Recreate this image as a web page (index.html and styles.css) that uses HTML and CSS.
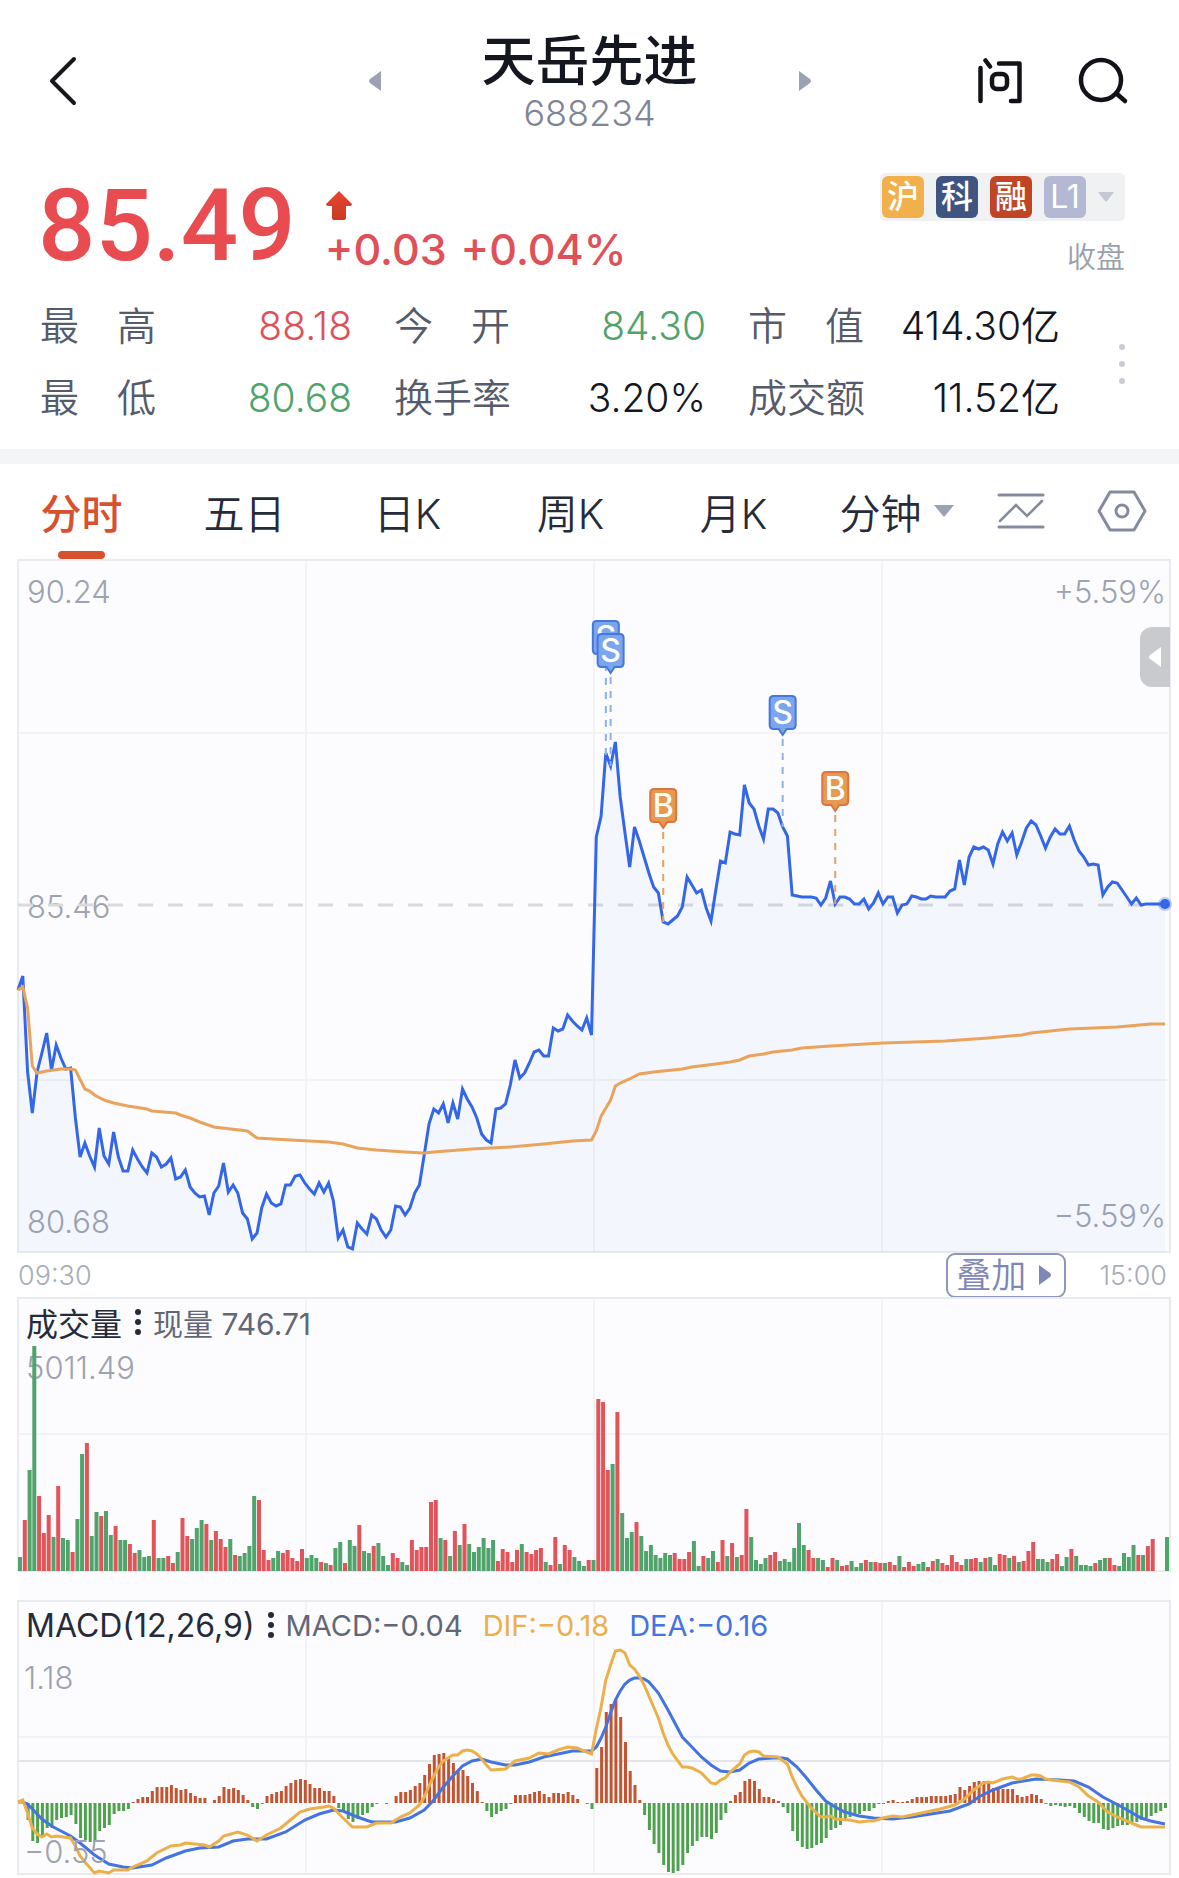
FILE: index.html
```html
<!DOCTYPE html>
<html lang="zh-CN">
<head>
<meta charset="UTF-8">
<meta name="viewport" content="width=device-width, initial-scale=1.0">
<title>天岳先进 688234</title>
<link rel="stylesheet" href="styles.css">
</head>
<body>

<header class="header">
  <button class="icon-btn back" aria-label="返回">
    <svg width="32" height="50" viewBox="0 0 32 50"><path d="M26 3 L4 25 L26 47" fill="none" stroke="#16181d" stroke-width="4" stroke-linecap="round" stroke-linejoin="round"/></svg>
  </button>
  <button class="icon-btn" aria-label="上一只">
    <svg width="12" height="20" viewBox="0 0 12 20"><path d="M12 0 V20 L1 12 Q-1 10 1 8 Z" fill="#9ca2b3"/></svg>
  </button>
  <div class="title">
    <h1>天岳先进</h1>
    <span class="code">688234</span>
  </div>
  <button class="icon-btn" aria-label="下一只">
    <svg width="12" height="20" viewBox="0 0 12 20"><path d="M0 0 V20 L11 12 Q13 10 11 8 Z" fill="#9ca2b3"/></svg>
  </button>
  <div class="actions">
    <button class="icon-btn" aria-label="问">
      <svg width="46" height="50" viewBox="0 0 46 50" fill="none" stroke="#111318" stroke-width="4.5" stroke-linecap="round" stroke-linejoin="round"><path d="M3.5 12 V45 M8.5 4.5 L13 10.5 M22 7.5 H42.5 V45 H34"/><rect x="15" y="18" width="15" height="15" rx="5"/></svg>
    </button>
    <button class="icon-btn" aria-label="搜索">
      <svg width="54" height="50" viewBox="0 0 54 50" fill="none" stroke="#111318" stroke-width="4.5" stroke-linecap="round"><circle cx="24" cy="24" r="20"/><path d="M40 38 L48 45"/></svg>
    </button>
  </div>
</header>

<section class="quote">
  <div class="price">85.49</div>
  <div class="change">
    <svg width="28" height="34" viewBox="0 0 28 34"><defs><linearGradient id="up" x1="0" y1="0" x2="0" y2="1"><stop offset="0" stop-color="#e64533"/><stop offset="1" stop-color="#c93a20"/></linearGradient></defs><path d="M14 1 L27 14 Q27 16 25 16 H21 V28 Q21 30 19 30 H9 Q7 30 7 28 V16 H3 Q1 16 1 14 Z" fill="url(#up)"/></svg>
    <div class="change-text"><span>+0.03</span><span>+0.04%</span></div>
  </div>
  <div class="market">
    <button class="badges" aria-label="标签">
      <span class="badge hu">沪</span>
      <span class="badge ke">科</span>
      <span class="badge rong">融</span>
      <span class="badge level">L1</span>
      <svg width="16" height="10" viewBox="0 0 16 10"><path d="M0 0 H16 L9 9 Q8 10 7 9 Z" fill="#c3c8d2"/></svg>
    </button>
    <span class="status">收盘</span>
  </div>
</section>

<section class="stats">
  <dl>
    <div><dt><span>最</span><span>高</span></dt><dd class="up">88.18</dd></div>
    <div><dt><span>今</span><span>开</span></dt><dd class="down">84.30</dd></div>
    <div><dt><span>市</span><span>值</span></dt><dd>414.30亿</dd></div>
    <div><dt><span>最</span><span>低</span></dt><dd class="down">80.68</dd></div>
    <div><dt><span>换手率</span></dt><dd>3.20%</dd></div>
    <div><dt><span>成交额</span></dt><dd>11.52亿</dd></div>
  </dl>
  <button class="icon-btn" aria-label="更多">
    <svg width="6" height="40" viewBox="0 0 6 40" fill="#c9ccd3"><circle cx="3" cy="3" r="3"/><circle cx="3" cy="20" r="3"/><circle cx="3" cy="37" r="3"/></svg>
  </button>
</section>

<nav class="tabs">
  <button class="tab active">分时</button>
  <button class="tab">五日</button>
  <button class="tab">日K</button>
  <button class="tab">周K</button>
  <button class="tab">月K</button>
  <button class="tab">分钟<svg width="20" height="12" viewBox="0 0 20 12"><path d="M0 0 H20 L11 11 Q10 12 9 11 Z" fill="#9ca2b3"/></svg></button>
  <button class="tab" aria-label="走势叠加">
    <svg width="48" height="38" viewBox="0 0 48 38" fill="none" stroke="#858b9c" stroke-width="3" stroke-linecap="round"><path d="M2 3 H46 M2 35 H46"/><path d="M3 29 L19 13 L30 24 L45 9" stroke-width="2.5"/></svg>
  </button>
  <button class="tab" aria-label="设置">
    <svg width="50" height="42" viewBox="0 0 50 42" fill="none" stroke="#858b9c" stroke-width="3" stroke-linejoin="round"><path d="M13 2 H37 L48 21 L37 40 H13 L2 21 Z"/><circle cx="25" cy="21" r="6"/></svg>
  </button>
</nav>

<main class="charts">
  <section class="panel price-panel">
    <span class="axis top-left">90.24</span>
    <span class="axis mid-left">85.46</span>
    <span class="axis bottom-left">80.68</span>
    <span class="axis top-right">+5.59%</span>
    <span class="axis bottom-right">−5.59%</span>
    <svg class="plot" id="price"></svg>
    <button class="handle" aria-label="展开">
      <svg width="12" height="20" viewBox="0 0 12 20"><path d="M12 0 V20 L1 12 Q-1 10 1 8 Z" fill="#fff"/></svg>
    </button>
  </section>

  <div class="times">
    <span>09:30</span>
    <button class="overlay-btn">叠加<svg width="12" height="20" viewBox="0 0 12 20"><path d="M0 0 V20 L11 12 Q13 10 11 8 Z" fill="#7e87b8"/></svg></button>
    <span>15:00</span>
  </div>

  <section class="panel volume-panel">
    <svg class="plot" id="volume-grid"></svg>
    <div class="legend">
      <button class="indicator">成交量<svg width="6" height="26" viewBox="0 0 6 26" fill="#262b3a"><circle cx="3" cy="3" r="3"/><circle cx="3" cy="13" r="3"/><circle cx="3" cy="23" r="3"/></svg></button>
      <span class="current">现量 746.71</span>
    </div>
    <span class="axis max">5011.49</span>
    <svg class="plot" id="volume"></svg>
  </section>

  <section class="panel macd-panel">
    <svg class="plot" id="macd-grid"></svg>
    <div class="legend">
      <button class="indicator">MACD(12,26,9)<svg width="6" height="26" viewBox="0 0 6 26" fill="#262b3a"><circle cx="3" cy="3" r="3"/><circle cx="3" cy="13" r="3"/><circle cx="3" cy="23" r="3"/></svg></button>
      <span class="values"><span>MACD:−0.04</span><span class="dif">DIF:−0.18</span><span class="dea">DEA:−0.16</span></span>
    </div>
    <span class="axis max">1.18</span>
    <svg class="plot" id="macd"></svg>
    <span class="axis min">−0.55</span>
  </section>
</main>

<script src="chart.js"></script>
</body>
</html>
```
FILE: styles.css
```css
* {
  box-sizing: border-box;
}
body {
  margin: 0;
  background: #fff;
  color: #14171f;
  font-family: Inter, "Noto Sans CJK SC", sans-serif;
}
button {
  margin: 0;
  padding: 0;
  border: 0;
  background: none;
  color: inherit;
  font: inherit;
  cursor: pointer;
}
svg {
  display: block;
  flex: none;
}

/* ヘッダー */
.header {
  display: grid;
  grid-template-columns: 1fr auto 418px auto 1fr;
  align-items: center;
  padding: 28px 48px 0;
  height: 134px;
}
.back {
  justify-self: start;
}
.title {
  display: flex;
  flex-direction: column;
  align-items: center;
}
.title h1 {
  margin: 0;
  font-size: 54px;
  font-weight: 500;
  line-height: 64px;
}
.code {
  color: #7f8596;
  font-size: 36px;
  font-weight: 300;
  line-height: 38px;
}
.actions {
  display: flex;
  justify-content: flex-end;
  gap: 54px;
}

/* 価格 */
.quote {
  display: flex;
  align-items: flex-start;
  padding: 39px 54px 0 38px;
  height: 158px;
}
.price {
  color: #e84b50;
  font-family: Roboto, sans-serif;
  font-size: 101px;
  font-weight: 500;
  line-height: 106px;
}
.change {
  padding: 17px 0 0 29px;
}
.change-text {
  display: flex;
  gap: 14px;
  color: #e05057;
  font-size: 43px;
  font-weight: 500;
  line-height: 50px;
}
.market {
  display: flex;
  flex-direction: column;
  align-items: flex-end;
  gap: 15px;
  margin-left: auto;
}
.badges {
  display: flex;
  align-items: center;
  gap: 12px;
  padding: 3px 11px 3px 2px;
  border-radius: 5px;
  background: #f0f1f3;
}
.badge {
  width: 42px;
  height: 42px;
  border-radius: 6px;
  color: #fff;
  font-size: 32px;
  font-weight: 500;
  line-height: 42px;
  text-align: center;
}
.hu { background: #f2b04c; }
.ke { background: #3f547f; }
.rong { background: #c04524; }
.level {
  background: #b3b8d3;
  font-weight: 400;
}
.status {
  color: #9a9fae;
  font-size: 29px;
  font-weight: 350;
  line-height: 44px;
}

/* 指標 */
.stats {
  display: flex;
  align-items: center;
  justify-content: space-between;
  padding: 0 54px 13px 40px;
  border-bottom: 15px solid #f4f5f7;
}
.stats dl {
  display: grid;
  grid-template-columns: repeat(3, 1fr);
  column-gap: 42px;
  flex: 0 1 1020px;
  margin: 0;
}
.stats dl div {
  display: flex;
  justify-content: space-between;
  height: 72px;
  font-size: 39px;
  font-weight: 350;
  line-height: 68px;
  white-space: nowrap;
}
.stats dt {
  display: flex;
  justify-content: space-between;
  width: 116px;
  color: #565b6b;
}
.stats dd {
  margin: 0;
}
.stats .up { color: #e05057; }
.stats .down { color: #4fa36b; }

/* タブ */
.tabs {
  display: grid;
  grid-template-columns: repeat(6, 163fr) 86fr 115fr;
  height: 96px;
}
.tab {
  position: relative;
  display: flex;
  align-items: center;
  justify-content: center;
  gap: 12px;
  padding-bottom: 2px;
  color: #262b3a;
  font-size: 41px;
  font-weight: 350;
}
.tab.active {
  color: #d8512f;
  font-weight: 500;
}
.tab.active::after {
  content: "";
  position: absolute;
  bottom: 1px;
  width: 47px;
  height: 8px;
  border-radius: 4px;
  background: #d8512f;
}

/* チャート */
.charts {
  padding: 0 9px 4px 18px;
}
.panel {
  position: relative;
  background: #fcfcfe;
}
.plot {
  position: absolute;
  inset: 0;
  width: 100%;
  height: 100%;
  overflow: visible;
}
.axis {
  color: #9ea3b1;
  font-size: 31px;
  font-weight: 300;
  line-height: 40px;
}
.price-panel {
  height: 692px;
}
.price-panel .axis {
  position: absolute;
}
.top-left { top: 12px; left: 9px; }
.mid-left { top: 327px; left: 9px; }
.bottom-left { bottom: 10px; left: 9px; }
.top-right { top: 12px; right: 4px; }
.bottom-right { bottom: 16px; right: 4px; }
.handle {
  position: absolute;
  top: 67px;
  right: 0;
  display: flex;
  align-items: center;
  justify-content: center;
  width: 30px;
  height: 60px;
  border-radius: 12px 0 0 12px;
  background: #c9cacd;
}
.times {
  display: flex;
  align-items: center;
  height: 46px;
  padding-right: 3px;
  color: #a8adb9;
  font-size: 27px;
  font-weight: 300;
}
.overlay-btn {
  display: flex;
  align-items: center;
  gap: 13px;
  height: 45px;
  margin: 0 33px 0 auto;
  padding: 0 13px 0 8px;
  border: 2px solid #8d95c0;
  border-radius: 9px;
  color: #7e87b8;
  font-size: 35px;
  font-weight: 350;
  line-height: 40px;
}
.legend {
  position: relative;
  display: flex;
  align-items: center;
  gap: 12px;
  padding: 0 8px;
  height: 48px;
  color: #626777;
  font-size: 29px;
  white-space: nowrap;
}
.indicator {
  display: flex;
  align-items: center;
  gap: 13px;
  color: #262b3a;
  font-size: 32px;
}
.current {
  font-size: 30px;
}
.max {
  display: block;
  position: relative;
  padding: 2px 0 0 8px;
}
.volume-panel {
  height: 303px;
}
.macd-panel {
  height: 273px;
}
.macd-panel .max {
  padding: 9px 0 0 6px;
}
.min {
  position: absolute;
  bottom: 2px;
  left: 6px;
}
.values {
  display: flex;
  gap: 20px;
}
.dif { color: #ecb04a; }
.dea { color: #4374e0; }

/* SVG の中身 */
.frame { fill: none; stroke: #e9ebee; stroke-width: 2; }
.grid { stroke: #f3f3f5; stroke-width: 2; }
.divider { stroke: #e3e5e9; stroke-width: 2; }
.prev-close { stroke: #d9dade; stroke-width: 3; stroke-dasharray: 15 15; }
.area { fill: #4a86f0; fill-opacity: 0.05; }
.line { fill: none; stroke-width: 3; stroke-linejoin: miter; }
.price-line { stroke: #3467e8; }
.avg-line { stroke: #e9a35b; }
.dif-line { stroke: #ecb04a; }
.dea-line { stroke: #4374e0; }
.last { fill: #3467e8; }
.last-halo { fill: #3467e8; fill-opacity: 0.3; }
.vol-up { fill: #e2545a; }
.vol-down { fill: #4fa36b; }
.macd-up { fill: #c4532f; }
.macd-down { fill: #4ea24e; }
.lead { stroke-width: 2; stroke-dasharray: 7 7; }
.lead-s { stroke: #8bb0ee; }
.lead-b { stroke: #e5a262; }
.flag-s { fill: #7ba5ec; stroke: #4677dc; stroke-width: 2; }
.flag-b { fill: #e59a50; stroke: #df7443; stroke-width: 2; }
.flag-text { fill: #fff; font-size: 32px; font-weight: 500; text-anchor: middle; }
```
FILE: chart.js
```js
const MINUTES = 240;

// 分時線: 1分ごとの y
const price = [
  430, 416, 512, 553, 512, 493, 473, 510, 485, 498, 509, 508, 558, 597, 583, 596, 607, 568, 596, 604,
  572, 597, 611, 611, 590, 599, 607, 613, 593, 597, 607, 604, 598, 619, 617, 610, 627, 633, 637, 636,
  655, 633, 626, 603, 632, 625, 633, 653, 659, 679, 673, 648, 634, 643, 646, 644, 625, 625, 616, 615,
  623, 629, 634, 623, 632, 623, 641, 678, 670, 687, 689, 663, 669, 674, 655, 659, 670, 677, 670, 646,
  647, 655, 648, 633, 625, 595, 564, 549, 553, 544, 563, 543, 559, 529, 539, 547, 558, 574, 580, 583,
  549, 548, 544, 525, 500, 518, 513, 503, 492, 490, 496, 496, 468, 471, 469, 455, 461, 466, 470, 458,
  475, 277, 256, 193, 206, 182, 237, 273, 307, 267, 281, 297, 313, 327, 333, 362, 364, 360, 356, 347,
  317, 325, 333, 330, 348, 361, 330, 301, 303, 272, 274, 275, 225, 243, 249, 266, 279, 249, 249, 253,
  267, 276, 335, 336, 337, 337, 337, 338, 345, 338, 321, 344, 337, 337, 339, 344, 344, 339, 349, 343,
  333, 344, 337, 337, 353, 345, 344, 336, 337, 339, 339, 336, 337, 337, 337, 331, 329, 300, 325, 297,
  287, 289, 287, 290, 304, 284, 272, 281, 273, 295, 282, 268, 261, 265, 276, 288, 277, 269, 274, 274,
  266, 280, 291, 297, 305, 304, 305, 335, 327, 322, 323, 330, 337, 344, 338, 345, 344, 344, 344, 344, 344
];

// 均線: [分, y]
const average = [
  [0, 430], [1, 427], [2, 448], [3, 506], [4, 513], [6, 511], [9, 509], [11, 509], [12, 510], [14, 529],
  [15, 531], [16, 535], [18, 540], [20, 543], [23, 546], [27, 549], [28, 551], [33, 553], [34, 555],
  [36, 558], [38, 562], [41, 567], [48, 571], [50, 578], [57, 580], [65, 582], [68, 584], [71, 588],
  [75, 590], [81, 592], [85, 593], [87, 592], [95, 589], [103, 587], [110, 584], [116, 581], [120, 580],
  [121, 571], [122, 556], [124, 540], [125, 526], [126, 523], [128, 519], [130, 514], [133, 512],
  [139, 509], [141, 507], [146, 504], [149, 502], [151, 500], [153, 496], [156, 494], [158, 492],
  [162, 490], [164, 488], [170, 486], [181, 483], [194, 481], [203, 478], [210, 475], [212, 473],
  [220, 469], [230, 467], [237, 464], [240, 464]
];

// 出来高: 正は赤、負は緑
const volume = [
  -14, 51, -101, -225, 75, 38, 56, -34, 85, -33, -31, 19, -52, -117, 128, -35, -59, 55, -60, -36,
  45, -31, -31, 27, 18, -21, -14, -15, 51, -13, -13, 15, 8, -19, 53, 35, -32, -43, -51, 47,
  -31, 40, 32, 24, -32, 16, -15, -18, -25, -75, 71, 21, 11, -13, -20, 18, 21, 13, 10, 22,
  -13, -16, -13, 9, -8, 6, -23, -29, 8, -31, -25, 46, -20, -18, 25, -28, -15, -6, 18, 13,
  -9, -6, 31, 21, 24, 24, 69, 71, -33, 31, -15, 40, -26, 47, -27, -19, -24, -33, -23, -31,
  10, 22, 19, 9, 21, -27, 19, 17, 21, 23, -9, 6, 34, -7, 26, 21, -14, -10, -5, 11,
  -11, 172, 169, 101, -107, 159, -58, -33, -39, 49, -35, -20, -26, -16, -13, -18, -16, 18, 12, 12,
  19, -30, -5, 15, -13, -20, 9, 31, -15, 28, -14, 16, 62, -34, -11, -7, -13, 16, 19, -10,
  -12, -9, -23, -48, -26, 21, 13, -13, -11, 4, 13, -11, 5, 6, -10, -4, -8, 11, -9, 9,
  8, -8, 9, 6, -15, 4, 9, 5, -7, -9, 4, 10, -12, 8, 6, 16, 9, 6, -12, 12,
  13, -9, 13, -14, -6, 17, 16, -13, 15, -9, 10, 20, 29, -12, -12, -9, 12, 17, -5, -14,
  22, -15, -6, -6, -5, 8, -11, -13, 13, 6, -5, -18, -14, -26, 16, -16, 25, 32, 0, 0, -34
];

const macd = [
  0, 0, -17, -38, -40, -34, -25, -25, -17, -15, -14, -12, -21, -35, -37, -39, -39, -28, -25, -22,
  -11, -8, -8, -6, 1, 4, 6, 6, 12, 16, 16, 16, 18, 15, 13, 14, 10, 7, 5, 5,
  0, 3, 7, 16, 14, 15, 13, 8, 3, -4, -6, -1, 7, 9, 11, 12, 17, 20, 23, 24,
  23, 19, 15, 15, 12, 12, 7, -5, -9, -16, -19, -16, -12, -10, -4, -1, 0, -1, 0, 7,
  11, 11, 13, 17, 20, 28, 39, 48, 49, 50, 44, 40, 33, 33, 27, 20, 12, 1, -8, -14,
  -11, -8, -6, -1, 8, 8, 8, 9, 11, 12, 9, 6, 10, 10, 9, 11, 8, 4, 0, -1,
  -6, 35, 56, 91, 99, 103, 86, 61, 32, 18, 3, -12, -27, -41, -50, -62, -69, -70, -68, -62,
  -50, -43, -38, -34, -34, -36, -30, -17, -10, 2, 8, 11, 22, 24, 22, 14, 6, 6, 4, 2,
  -4, -10, -28, -38, -44, -46, -45, -42, -40, -35, -27, -25, -22, -17, -14, -13, -11, -8, -8, -5,
  -1, -1, 2, 3, 1, 1, 2, 4, 6, 6, 6, 7, 7, 7, 7, 8, 9, 16, 13, 17,
  21, 22, 22, 20, 15, 15, 14, 14, 14, 8, 6, 7, 9, 8, 4, -1, -3, -2, -3, -4,
  -3, -5, -10, -14, -18, -20, -20, -26, -27, -25, -23, -22, -22, -20, -19, -17, -15, -13, -10, -8, -5
];

const dif = [
  [0, 201], [1, 199], [2, 212], [3, 227], [4, 233], [5, 236], [6, 233], [7, 236], [8, 235], [11, 237],
  [12, 245], [13, 255], [14, 261], [16, 272], [17, 270], [19, 272], [20, 269], [23, 269], [24, 266],
  [27, 260], [29, 252], [32, 245], [34, 244], [35, 242], [39, 244], [40, 246], [42, 240], [43, 235],
  [46, 231], [48, 234], [50, 240], [52, 234], [55, 227], [57, 219], [59, 211], [61, 208], [64, 206],
  [65, 205], [66, 207], [68, 217], [70, 226], [73, 226], [75, 222], [78, 222], [80, 216], [82, 212],
  [84, 204], [85, 196], [86, 185], [87, 175], [88, 166], [89, 160], [91, 154], [92, 154], [93, 150],
  [94, 149], [95, 150], [96, 153], [97, 158], [98, 164], [99, 169], [102, 168], [104, 160], [107, 157],
  [109, 152], [111, 153], [113, 149], [115, 146], [117, 147], [119, 151], [120, 153], [121, 128],
  [122, 106], [123, 79], [124, 64], [125, 50], [126, 49], [127, 52], [128, 64], [129, 68], [130, 75],
  [131, 84], [133, 106], [134, 117], [135, 132], [136, 144], [137, 153], [139, 166], [140, 166],
  [141, 167], [143, 172], [145, 182], [146, 183], [147, 179], [148, 177], [149, 171], [151, 163],
  [152, 154], [153, 151], [154, 150], [155, 151], [156, 155], [159, 156], [161, 163], [162, 176],
  [163, 186], [164, 195], [166, 207], [168, 216], [169, 216], [170, 215], [171, 218], [174, 219],
  [176, 221], [178, 220], [179, 220], [181, 217], [183, 215], [185, 216], [187, 214], [190, 211],
  [193, 208], [196, 204], [198, 198], [200, 189], [202, 182], [203, 181], [204, 182], [206, 178],
  [207, 177], [208, 176], [209, 178], [210, 178], [212, 174], [213, 174], [214, 175], [215, 178],
  [218, 180], [220, 181], [222, 186], [224, 195], [226, 201], [228, 211], [230, 216], [233, 222],
  [235, 226], [238, 226], [240, 226]
];

const dea = [
  [0, 201], [1, 201], [2, 203], [5, 218], [7, 225], [9, 230], [11, 235], [13, 242], [16, 254], [19, 263],
  [22, 266], [24, 267], [28, 264], [31, 257], [35, 250], [38, 247], [42, 246], [45, 240], [48, 238],
  [52, 238], [56, 231], [60, 219], [63, 213], [66, 209], [68, 210], [71, 216], [74, 221], [79, 221],
  [82, 217], [85, 209], [87, 199], [89, 186], [91, 175], [93, 165], [95, 160], [97, 158], [99, 161],
  [102, 164], [104, 164], [107, 161], [110, 156], [113, 153], [116, 150], [118, 150], [120, 150],
  [121, 146], [122, 137], [123, 126], [124, 112], [125, 99], [126, 90], [127, 83], [128, 79], [129, 77],
  [130, 77], [131, 78], [132, 81], [134, 92], [136, 109], [139, 136], [141, 146], [143, 156], [145, 164],
  [147, 170], [149, 171], [151, 169], [153, 162], [155, 158], [158, 157], [160, 157], [161, 158],
  [163, 166], [165, 177], [167, 189], [169, 200], [171, 206], [173, 211], [176, 215], [179, 217],
  [183, 218], [187, 216], [191, 213], [195, 210], [199, 203], [201, 196], [204, 189], [208, 182],
  [213, 178], [218, 179], [221, 180], [224, 186], [227, 196], [231, 206], [235, 217], [237, 220], [240, 223]
];

// 売買マーク: 分, 種類, 旗の上端, 点線の下端
const marks = [
  { at: 123, type: "S", top: 60, end: 200 },
  { at: 124, type: "S", top: 73, end: 206 },
  { at: 160, type: "S", top: 135, end: 267 },
  { at: 135, type: "B", top: 228, end: 362 },
  { at: 171, type: "B", top: 211, end: 344 }
];

function line(x1, y1, x2, y2, cls) {
  return `<line x1="${x1}" y1="${y1}" x2="${x2}" y2="${y2}" class="${cls}"/>`;
}

function grid(w, h, rows) {
  let out = "";
  for (const q of [1, 2, 3]) out += line(w * q / 4, 0, w * q / 4, h, "grid");
  for (const y of rows) out += line(0, y, w, y, "grid");
  return out + `<rect x="0" y="0" width="${w}" height="${h}" class="frame"/>`;
}

function path(points, x) {
  return points.map(([i, y], n) => `${n ? "L" : "M"}${x(i).toFixed(1)} ${y}`).join("");
}

function bar(left, top, width, height, cls) {
  return `<rect x="${left.toFixed(1)}" y="${top}" width="${width}" height="${height}" class="${cls}"/>`;
}

function flag(m, x) {
  const cx = x(m.at);
  const t = m.top;
  const type = m.type.toLowerCase();
  return line(cx, t + 44, cx, m.end, `lead lead-${type}`) +
    `<path d="M${cx - 9} ${t + 1}h18q4 0 4 4v25q0 4 -4 4h-5l-4 6l-4 -6h-5q-4 0 -4 -4v-25q0 -4 4 -4z" class="flag-${type}"/>` +
    `<text x="${cx}" y="${t + 29}" class="flag-text">${m.type}</text>`;
}

function draw() {
  const w = document.getElementById("price").clientWidth;
  const x = i => i * (w - 5) / MINUTES;

  const p = price.map((y, i) => [i, y]);
  document.getElementById("price").innerHTML =
    grid(w, 692, [173, 520]) +
    line(0, 345, w, 345, "prev-close") +
    `<path d="${path(p, x)}V692H0Z" class="area"/>` +
    `<path d="${path(p, x)}" class="line price-line"/>` +
    `<path d="${path(average, x)}" class="line avg-line"/>` +
    marks.map(m => flag(m, x)).join("") +
    `<circle cx="${x(MINUTES)}" cy="344" r="7" class="last-halo"/><circle cx="${x(MINUTES)}" cy="344" r="5" class="last"/>`;

  document.getElementById("volume-grid").innerHTML = grid(w, 273, [136]);
  document.getElementById("volume").innerHTML = volume
    .map((v, i) => bar(x(i), 273 - Math.abs(v), 4, Math.abs(v), v > 0 ? "vol-up" : "vol-down"))
    .join("");

  document.getElementById("macd-grid").innerHTML =
    grid(w, 273, [136]) +
    line(0, 160, w, 160, "divider");
  document.getElementById("macd").innerHTML =
    macd.map((v, i) => bar(x(i) - 1, v > 0 ? 202 - v : 202, 3, Math.abs(v), v > 0 ? "macd-up" : "macd-down")).join("") +
    `<path d="${path(dea, x)}" class="line dea-line"/>` +
    `<path d="${path(dif, x)}" class="line dif-line"/>`;
}

draw();
window.addEventListener("resize", draw);
```
